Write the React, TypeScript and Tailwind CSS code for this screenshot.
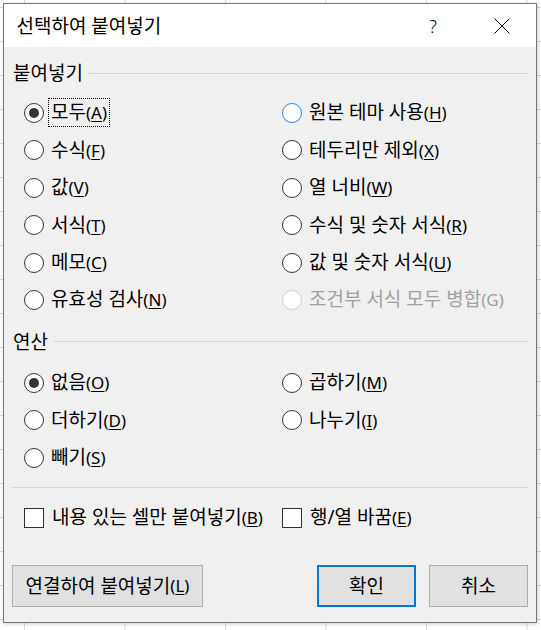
import React from 'react';

type Opt = {
  label: string;
  key?: string;
  checked?: boolean;
  focused?: boolean;
  hover?: boolean;
  disabled?: boolean;
};

const PASTE_ROWS: [Opt, Opt][] = [
  [{ label: '모두', key: 'A', checked: true, focused: true }, { label: '원본 테마 사용', key: 'H', hover: true }],
  [{ label: '수식', key: 'F' }, { label: '테두리만 제외', key: 'X' }],
  [{ label: '값', key: 'V' }, { label: '열 너비', key: 'W' }],
  [{ label: '서식', key: 'T' }, { label: '수식 및 숫자 서식', key: 'R' }],
  [{ label: '메모', key: 'C' }, { label: '값 및 숫자 서식', key: 'U' }],
  [{ label: '유효성 검사', key: 'N' }, { label: '조건부 서식 모두 병합', key: 'G', disabled: true }],
];

const OP_ROWS: [Opt, Opt | null][] = [
  [{ label: '없음', key: 'O', checked: true }, { label: '곱하기', key: 'M' }],
  [{ label: '더하기', key: 'D' }, { label: '나누기', key: 'I' }],
  [{ label: '빼기', key: 'S' }, null],
];

// access key part "(A)" is drawn a bit smaller, like Segoe UI next to Malgun Gothic
function AccessKey({ k, plain }: { k?: string; plain?: boolean }) {
  return (
    <span className="text-[17px]">
      ({plain ? k : <u className="underline-offset-2">{k}</u>})
    </span>
  );
}

function Label({ opt }: { opt: Opt }) {
  return (
    <span
      className={`border px-[2px] leading-[26px] ${opt.focused ? 'border-dotted border-black' : 'border-transparent'} ${opt.disabled ? 'text-[#a0a0a0]' : 'text-black'}`}
    >
      {opt.label}
      <AccessKey k={opt.key} plain={opt.disabled} />
    </span>
  );
}

function Radio({ opt }: { opt: Opt }) {
  const ring = opt.disabled ? 'border-[#cccccc]' : opt.hover ? 'border-[#2b86de]' : 'border-[#333333]';
  return (
    <div className="flex h-[37.4px] items-center gap-[4px]">
      <span className={`flex h-[20px] w-[20px] shrink-0 items-center justify-center rounded-full border-[1.5px] bg-white ${ring}`}>
        {opt.checked && <span className="h-[10px] w-[10px] rounded-full bg-[#333333]" />}
      </span>
      <Label opt={opt} />
    </div>
  );
}

function Check({ opt }: { opt: Opt }) {
  return (
    <div className="flex h-[37.4px] items-center gap-[5px]">
      <span className="h-[20px] w-[20px] shrink-0 border-[1.5px] border-[#333333] bg-white" />
      <Label opt={opt} />
    </div>
  );
}

function SectionHeader({ title }: { title: string }) {
  return (
    <div className="flex h-[24px] items-center pl-[9px] pr-[7px]">
      <span className="leading-[24px]">{title}</span>
      <span className="ml-[6px] h-px flex-1 bg-[#d5d5d5]" />
    </div>
  );
}

export default function App() {
  return (
    <div className="h-[630px] w-[541px] overflow-hidden bg-white bg-[linear-gradient(to_right,#d9d9d9_1px,transparent_1px),linear-gradient(to_bottom,#d9d9d9_1px,transparent_1px)] bg-[length:100.5px_34px] bg-[position:24px_7px] pt-[3px] pl-[3px] font-['Noto_Sans','Noto_Sans_CJK_KR',sans-serif] text-[19px] text-black">
      <div className="flex h-[620px] w-[534px] flex-col border border-[#777777] bg-[#f0f0f0] shadow-[1px_1px_4px_rgba(0,0,0,0.2)]">
        {/* title bar */}
        <div className="flex h-[43px] items-center bg-white pl-[12.5px]">
          <span className="flex-1 leading-[24px]">선택하여 붙여넣기</span>
          <span className="w-[20px] text-center text-[18px] font-light leading-[24px]">?</span>
          <svg className="ml-[51px] mr-[26px]" width="16" height="16" viewBox="0 0 16 16">
            <path d="M0.5 0.5 L15.5 15.5 M15.5 0.5 L0.5 15.5" stroke="#000" strokeWidth="1" fill="none" />
          </svg>
        </div>

        <div className="flex flex-1 flex-col pt-[14px]">
          <SectionHeader title="붙여넣기" />
          <div className="mt-[9.3px] grid grid-cols-[258px_1fr] pl-[20px]">
            {PASTE_ROWS.map(([l, r]) => (
              <React.Fragment key={l.key}>
                <Radio opt={l} />
                <Radio opt={r} />
              </React.Fragment>
            ))}
          </div>

          <div className="mt-[11.3px]">
            <SectionHeader title="연산" />
          </div>
          <div className="mt-[10.3px] grid grid-cols-[258px_1fr] pl-[20px]">
            {OP_ROWS.map(([l, r]) => (
              <React.Fragment key={l.key}>
                <Radio opt={l} />
                {r ? <Radio opt={r} /> : <div />}
              </React.Fragment>
            ))}
          </div>

          <div className="mt-[10.5px] ml-[8px] mr-[7px] h-px bg-[#d5d5d5]" />

          <div className="mt-[11.3px] grid grid-cols-[258px_1fr] pl-[20px]">
            <Check opt={{ label: '내용 있는 셀만 붙여넣기', key: 'B' }} />
            <Check opt={{ label: '행/열 바꿈', key: 'E' }} />
          </div>

          <div className="mt-[28.3px] flex h-[42px] items-stretch pl-[8px] pr-[8px]">
            <button className="flex w-[191px] items-center justify-center border border-[#adadad] bg-[#e1e1e1]">
              연결하여 붙여넣기<AccessKey k="L" />
            </button>
            <button className="ml-auto flex w-[99px] items-center justify-center border-2 border-[#0078d7] bg-[#e1e1e1]">
              확인
            </button>
            <button className="ml-[13px] flex w-[99px] items-center justify-center border border-[#adadad] bg-[#e1e1e1]">
              취소
            </button>
          </div>
        </div>
      </div>
    </div>
  );
}
